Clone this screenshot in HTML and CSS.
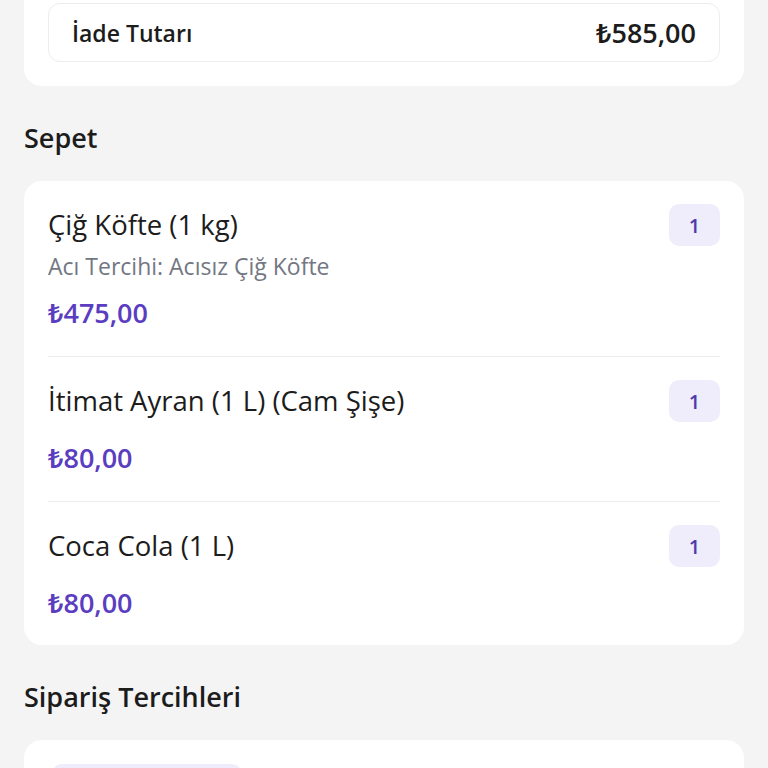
FILE: index.html
```html
<!DOCTYPE html>
<html lang="tr">
<head>
<meta charset="utf-8">
<link rel="stylesheet" href="styles.css">
</head>
<body>
<main class="page">
  <section class="card refund-card">
    <div class="refund-box">
      <span class="refund-label">İade Tutarı</span>
      <span class="refund-value">₺585,00</span>
    </div>
  </section>

  <h2 class="section-title">Sepet</h2>
  <section class="card basket">
    <div class="item">
      <div class="item-info">
        <div class="item-name">Çiğ Köfte (1 kg)</div>
        <div class="item-option">Acı Tercihi: Acısız Çiğ Köfte</div>
        <div class="item-price">₺475,00</div>
      </div>
      <div class="qty">1</div>
    </div>
    <div class="item">
      <div class="item-info">
        <div class="item-name">İtimat Ayran (1 L) (Cam Şişe)</div>
        <div class="item-price">₺80,00</div>
      </div>
      <div class="qty">1</div>
    </div>
    <div class="item">
      <div class="item-info">
        <div class="item-name">Coca Cola (1 L)</div>
        <div class="item-price">₺80,00</div>
      </div>
      <div class="qty">1</div>
    </div>
  </section>

  <h2 class="section-title">Sipariş Tercihleri</h2>
  <section class="card prefs">
    <div class="pref-chip"></div>
  </section>
</main>
</body>
</html>
```
FILE: styles.css
```css
* { box-sizing: border-box; }
html, body { margin: 0; padding: 0; }
body {
  background: #f4f4f4;
  font-family: "Open Sans", "Noto Sans", sans-serif;
  color: #1c1c1c;
}
.page {
  margin-top: -21px;
  padding: 0 24px;
}
.card {
  background: #ffffff;
  border-radius: 18px;
}
.refund-card {
  padding: 24px;
}
.refund-box {
  height: 59px;
  border: 1px solid #ededed;
  border-radius: 12px;
  display: flex;
  align-items: center;
  justify-content: space-between;
  padding: 0 23px;
}
.refund-label {
  font-size: 23px;
  font-weight: 600;
}
.refund-value {
  font-size: 27px;
  font-weight: 600;
}
.section-title {
  margin: 36px 0 27px;
  font-size: 27px;
  line-height: 32px;
  font-weight: 600;
}
.basket {
  padding: 0 24px;
}
.item {
  display: flex;
  justify-content: space-between;
  align-items: flex-start;
  padding: 23px 0 24px;
  border-bottom: 1px solid #ececec;
}
.item:last-child { border-bottom: none; padding-bottom: 23px; }
.item-info {
  display: flex;
  flex-direction: column;
}
.item-name {
  font-size: 27.5px;
  line-height: 42px;
  margin-bottom: 17px;
}
.item-option {
  font-size: 23px;
  line-height: 32px;
  color: #737783;
  margin-top: -13px;
  margin-bottom: 12px;
}
.item-price {
  font-size: 27px;
  line-height: 38px;
  font-weight: 600;
  color: #5a3dc0;
}
.qty {
  width: 51px;
  height: 42px;
  border-radius: 10px;
  background: #efedfb;
  color: #4e3aa8;
  font-size: 20px;
  font-weight: 600;
  display: flex;
  align-items: center;
  justify-content: center;
}
.prefs {
  height: 120px;
  padding: 24px 28px;
}
.pref-chip {
  width: 190px;
  height: 40px;
  border-radius: 10px;
  background: #efedfb;
}
```
